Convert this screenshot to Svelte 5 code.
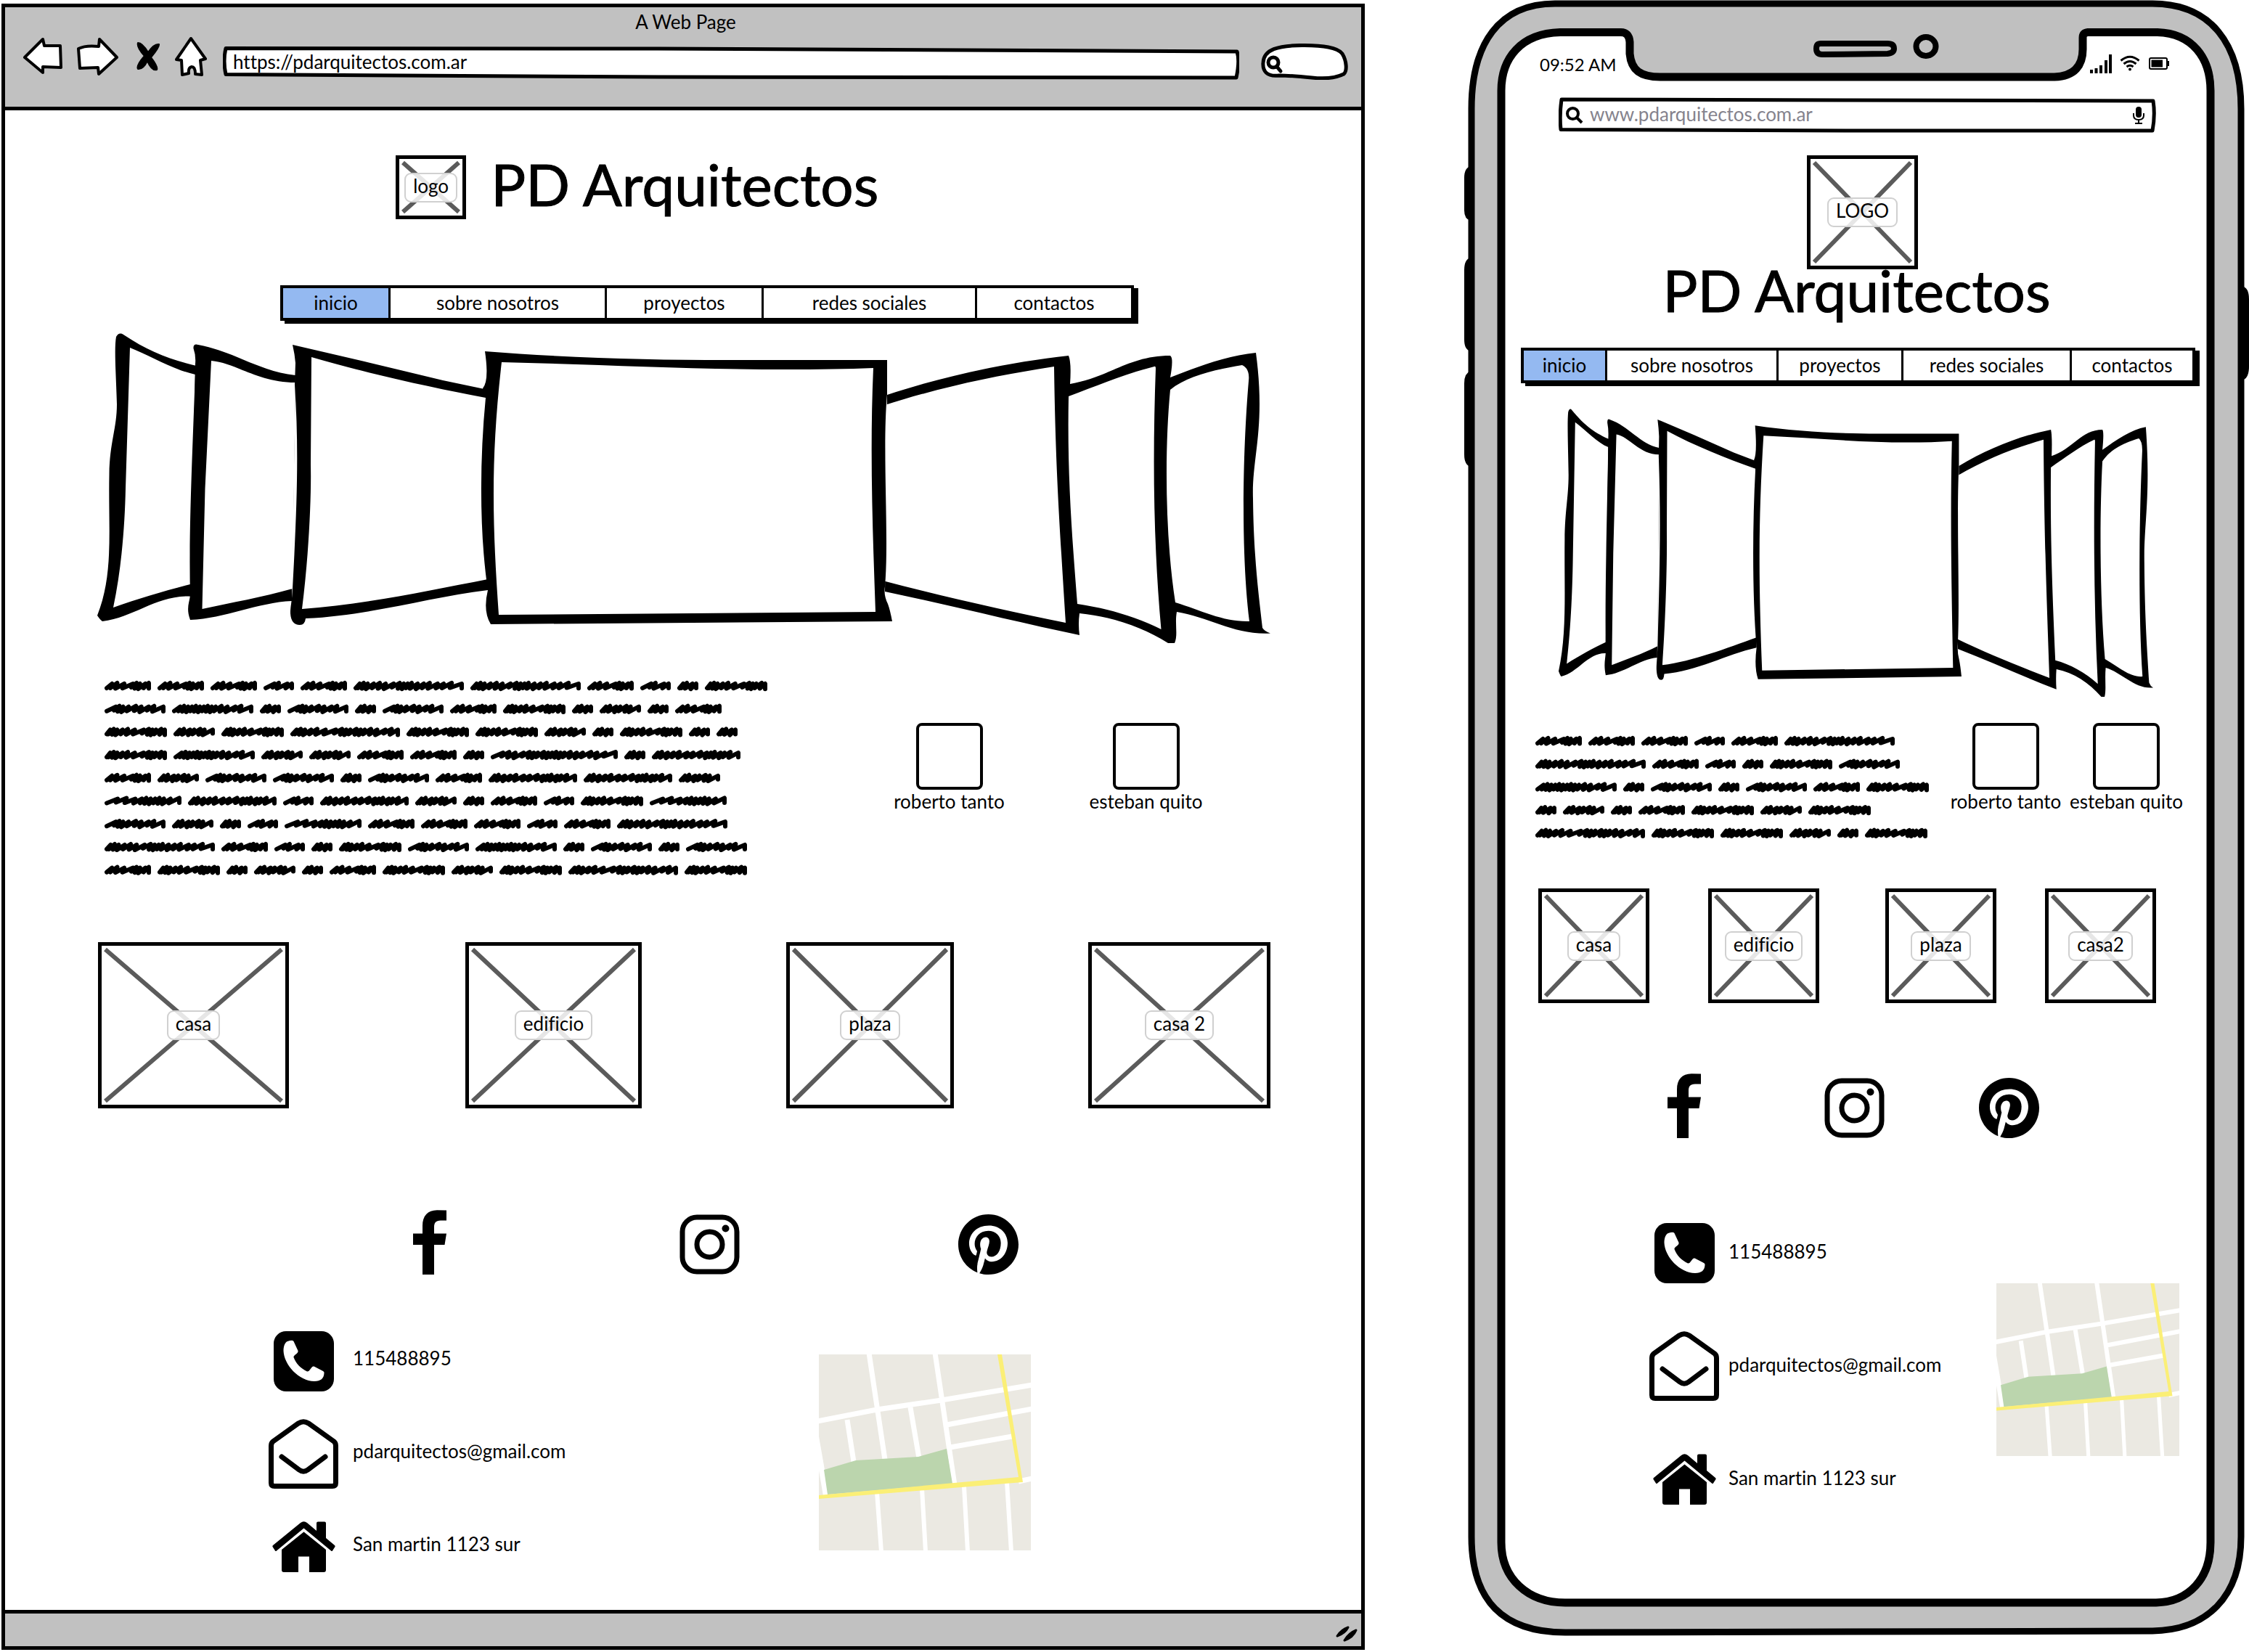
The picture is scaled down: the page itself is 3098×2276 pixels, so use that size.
<script>
  const menu = ['inicio', 'sobre nosotros', 'proyectos', 'redes sociales', 'contactos'];
  const team = ['roberto tanto', 'esteban quito'];
  const contacts = [
    { icon: 'phone', text: '115488895' },
    { icon: 'mail', text: 'pdarquitectos@gmail.com' },
    { icon: 'home', text: 'San martin 1123 sur' }
  ];
  const networks = ['facebook', 'instagram', 'pinterest'];
  const projects = ['casa', 'edificio', 'plaza', 'casa 2'];
  const mobileProjects = ['casa', 'edificio', 'plaza', 'casa2'];

  // Scribbled words: total width and the rhythm of their strokes (bigger digit = wider stroke).
  const words = {
    w: [29, '2232'],
    s: [42, '4242'],
    p: [57, '2232324'],
    m: [64, '33452232'],
    t: [84, '522343435'],
    M: [86, '222334532232'],
    q: [106, '54432222234'],
    u: [112, '322222222233435'],
    x: [122, '223334343223234'],
    k: [151, '222334532232233433'],
    L: [152, '222333432223334345'],
    z: [175, '53343223222223334345']
  };

  const longText = ['mmmsmLLmswM', 'tuwtwtmMwpwm', 'MpMkMMpwMww', 'MuppmmwzwX', 'mpttwtmxxp', 'qxsxpwmsMq', 'tpwsqmmmsmL', 'LmswMtuwtwt', 'mMwpwmMpMkM'].map((l) => l.replace('X', 'x'));
  const shortText = ['mmmsmL', 'LmswMt', 'uwtwtmM', 'wpwmMpM', 'kMMpwM'];

  function scribble(lines) {
    let d = '';
    lines.forEach((line, row) => {
      let left = 0;
      const y = row * 31.7;
      for (const key of line) {
        const [width, steps] = words[key];
        const nums = [...steps].map(Number);
        const unit = (width - 6) / nums.reduce((a, b) => a + b, 0);
        let x = left + 3;
        d += `M${x.toFixed(1)} ${(y + 14).toFixed(1)}`;
        nums.forEach((n, i) => {
          x += n * unit;
          const up = y + 7.5 + (i % 3 === 1 ? -0.5 : 0.5);
          const down = y + 14 + (i % 3) * 0.6 - (n > 3 ? 1 : 0);
          d += `L${x.toFixed(1)} ${up.toFixed(1)}`;
          d += `L${(x - (i === nums.length - 1 ? 0 : 2.5)).toFixed(1)} ${down.toFixed(1)}`;
        });
        left += width + 9;
      }
    });
    return d;
  }
</script>

{#snippet placeholder(label)}
  <figure class="placeholder">
    <svg class="cross" viewBox="0 0 100 100" preserveAspectRatio="none" aria-hidden="true">
      <path d="M0 0L100 100M100 0L0 100" />
    </svg>
    <figcaption>{label}</figcaption>
  </figure>
{/snippet}

{#snippet siteMenu()}
  <nav class="menu" aria-label="Principal">
    {#each menu as item, i}
      <a href="#{item.replace(' ', '-')}" class:active={i === 0}>{item}</a>
    {/each}
  </nav>
{/snippet}

{#snippet carousel()}
  <svg class="carousel" viewBox="134 460 1616 426" preserveAspectRatio="none" role="img" aria-label="Carrusel">
    <path d="M160 464Q164 457 170 461C206 485 236 496 275 505L270 822C218 817 188 850 141 856Q138 854 134 848C157 790 149 730 150.500 653C151 610 161 590 161 557C160 520 157 480 160 464Z" />
    <path class="face" d="M179 479C207 490 240 510 269 516L262 805C230 813 190 825 156 837C168 780 172 720 173 673Z" />
    <path d="M266.500 480Q266 473 273 475C325 485 355 511 407 517L402 828C355 830 310 852 262 854C256 838 261 830 262 820C260 740 264 650 268 540L269 501Q270 490 266.500 480Z" />
    <path class="face" d="M291 497C325 500 355 527 407 527L403 811C360 823 320 830 278.500 839L282.500 673Z" />
    <path d="M403 475L502 498L610 524L672 537V813C590 823 510 848 421 852Q420 861 413 861Q401 861 400 845C400 835 402 830 403 811C409 700 412 620 406 530L407 500Q406 488 403 475Z" />
    <path class="face" d="M429 492C500 513 590 533 669 548L672 798C590 814 500 833 416 839C426 760 429 680 428 640Z" />
    <path d="M1222 544C1300 518 1390 499 1472 490Q1476 500 1474 529C1530 519 1555 490 1612 490Q1617 493 1612 520C1650 505 1690 490 1730 486C1744 590 1724 630 1726 687C1727 770 1734 820 1739 865Q1742 870 1750 872.500C1700 875 1665 850 1621 843C1618 860 1623 875 1618 886H1609C1575 865 1535 850 1487 845Q1485 860 1487 875C1400 857 1310 834 1219 815Z" />
    <path class="face" d="M1216 559C1300 532 1375 517 1452 505C1454 650 1460 730 1468 858C1390 842 1300 822 1216 800Z" />
    <path class="face" d="M1472 546C1510 532 1550 515 1590 505Q1592 504 1592 508C1588 620 1588 740 1599.500 867C1565 850 1525 838 1484 832C1476 730 1470 650 1472 546Z" />
    <path class="face" d="M1612 537C1635 518 1675 509 1711 503Q1722 508 1720 525C1712 620 1709 760 1721 856C1685 857 1655 841 1619 830C1605 740 1604 620 1612 537Z" />
    <path d="M668 484C780 493 900 496 1000 496H1222V543C1215 620 1225 740 1219 808Q1217 820 1223 832Q1226 840 1229 856L676 860Q665 842 672 813C661 740 660 640 669 548L665 535Q674 525 668 484Z" />
    <path class="face" d="M691 499C817 502 950 509 1083 509Q1150 509 1203 507C1198 620 1202 730 1206 843L687 847C678 720 676 630 691 499Z" />
  </svg>
{/snippet}

{#snippet paragraph(lines, width)}
  <svg class="scribble" {width} height={lines.length * 32 - 12} role="img" aria-label="Texto">
    <path d={scribble(lines)} />
  </svg>
{/snippet}

{#snippet member(name)}
  <figure class="member">
    <div class="avatar"></div>
    <figcaption>{name}</figcaption>
  </figure>
{/snippet}

{#snippet network(name)}
  <a class="network" href="#{name}" aria-label={name}>
    {#if name === 'facebook'}
      <svg width="46" height="89" viewBox="0 0 46 89"><path d="M46 .5V14.600H38C31 14.600 29 18 29 24V32.500H46L43.500 48H29V89H13V48H0V32.500H13V22C13 8 20 .5 33 .2Z" /></svg>
    {:else if name === 'instagram'}
      <svg width="83" height="83" viewBox="0 0 83 83">
        <rect class="line" x="4" y="4" width="75" height="75" rx="20" />
        <circle class="line" cx="41.500" cy="41.500" r="17.500" />
        <circle cx="63.500" cy="19.500" r="5" />
      </svg>
    {:else}
      <svg width="83" height="83" viewBox="0 8 496 496"><path d="M496 256c0 137-111 248-248 248-25.600 0-50.200-3.900-73.400-11.100 10.100-16.500 25.200-43.500 30.800-65 3-11.600 15.400-59 15.400-59 8.100 15.400 31.700 28.500 56.800 28.500 74.800 0 128.700-68.800 128.700-154.300 0-81.900-66.900-143.200-152.900-143.200-107 0-163.900 71.800-163.900 150.100 0 36.400 19.400 81.700 50.300 96.100 4.700 2.200 7.200 1.200 8.300-3.300.8-3.400 5-20.300 6.900-28.100.6-2.500.3-4.700-1.700-7.100-10.100-12.500-18.300-35.300-18.300-56.600 0-54.700 41.400-107.600 112-107.600 60.900 0 103.600 41.500 103.600 100.900 0 67.100-33.900 113.600-78 113.600-24.300 0-42.600-20.100-36.700-44.800 7-29.500 20.500-61.300 20.500-82.600 0-19-10.200-34.900-31.400-34.900-24.900 0-44.900 25.700-44.900 60.200 0 22 7.400 36.800 7.400 36.800s-24.500 103.800-29 123.200c-5 21.400-3 51.600-.9 71.200C65.400 450.900 0 361.100 0 256 0 119 111 8 248 8s248 111 248 248z" /></svg>
    {/if}
  </a>
{/snippet}

{#snippet contactList()}
  <ul class="contacts">
    {#each contacts as { icon, text }}
      <li>
        <span class="contact-icon">
          {#if icon === 'phone'}
            <svg width="83" height="83" viewBox="0 0 83 83" aria-hidden="true">
              <rect width="83" height="83" rx="17" />
              <path class="white" d="M13.500 27C13.500 20 16 15 19 14Q26 11.500 27.500 14L33.500 27Q34 29 31 31.500Q27 34 27.500 36C31 45 37 51 46 55.500Q48 56 50 53C53 48.500 54 48 56 48.700L68 55Q70 56 69.500 58C69 65 65 69 56 69C35 69 14 46 13.500 27Z" />
            </svg>
          {:else if icon === 'mail'}
            <svg width="96" height="96" viewBox="0 0 96 96" aria-hidden="true">
              <path class="line" d="M3.500 37Q3.500 33 6 31L41 6Q48 1.500 55 6L90 31Q92.500 33 92.500 37V88Q92.500 92.500 88 92.500H8Q3.500 92.500 3.500 88Z" />
              <path class="line" d="M18 52L42 70Q48 74.500 54 70L78 52" stroke-linecap="round" />
            </svg>
          {:else}
            <svg width="87" height="70" viewBox="0 0 87 70" aria-hidden="true">
              <path d="M.5 35Q0 34 1 33L39 2Q43.500-1.500 48 2L61 13V2.500Q61 .5 63 .5H72Q74 .5 74 2.500V23L86 33Q87 34 86.500 35L83 40.500Q82 41.500 81 40.500L43.500 9.500L6 40.500Q5 41.500 4 40.500Z" />
              <path d="M13 39L43.500 14.500L74 39V67Q74 70 71 70H51V48.500H36V70H16Q13 70 13 67Z" />
            </svg>
          {/if}
        </span>
        <span class="contact-text">{text}</span>
      </li>
    {/each}
  </ul>
{/snippet}

{#snippet map()}
  <svg class="map" viewBox="0 0 292 270" preserveAspectRatio="none" role="img" aria-label="Mapa">
    <rect width="292" height="270" fill="#ebe9e2" />
    <g fill="none" stroke="#fff" stroke-width="7">
      <path d="M69 -2L91 145M160 -2L187 180M-2 92L80 76L169 63L294 42M39 90L48 148M126 73L138 143M176 97L294 75M181 128L266 113M275 175L294 171" />
      <path stroke-width="6" d="M80 190L86 272M142 185L147 272M200 182L205 272M259 176L265 272" />
    </g>
    <path fill="#fff" d="M0 113L8 159L13 195H6L0 160Z" />
    <path fill="#bbd5ad" d="M7 159L51 146L137 141L176 130L184 178L12 193Z" />
    <path fill="#fbef76" d="M246 0H252L281 176L0 199V194L275 169Z" />
  </svg>
{/snippet}

<div class="page">
  <article class="browser">
    <header class="toolbar">
      <p class="window-title">A Web Page</p>
      <div class="tools">
        <div class="buttons">
          <button type="button" aria-label="Atrás"><svg width="54" height="54" viewBox="0 0 54 54"><path d="M2 28L27 3L29 12H51L52 42L27 41V49Z" /></svg></button>
          <button type="button" aria-label="Adelante"><svg width="57" height="54" viewBox="0 0 57 54"><path d="M2 16Q12 11 30 13L31 3L55 28L30 51L29 42L4 43Q3 30 2 16Z" /></svg></button>
          <button type="button" aria-label="Detener"><svg width="38" height="42" viewBox="-4 0 38 42"><path class="solid" d="M3 2Q9 2 17 15Q25 3 32 4Q33 8 21 22Q31 35 29 39Q22 41 16 27Q10 39 3 38Q0 34 12 20Q1 8 3 2Z" /></svg></button>
          <button type="button" aria-label="Inicio"><svg width="44" height="56" viewBox="0 0 44 56"><path d="M22 3L42 31L35 33L37 53L28 52Q28 42 23 42Q18 43 19 51L10 53L9 33L2 32Z" /></svg></button>
        </div>
        <div class="sketch address">
          <svg viewBox="0 0 1400 46" preserveAspectRatio="none" aria-hidden="true"><path d="M4 2.500L600 3L1397 7Q1401 20 1396 43L600 42L4 38.500Q0 20 4 2.500Z" /></svg>
          <input type="text" aria-label="Dirección" value="https://pdarquitectos.com.ar" />
        </div>
        <label class="sketch quick">
          <svg viewBox="0 0 120 50" preserveAspectRatio="none" aria-hidden="true">
            <path d="M25 44C8 46 2 38 3 26C4 9 22 2 60 2.500C85 3 105 5 112 14C118 24 119 38 114 42C104 47 88 49 70 47C50 45 40 44 25 44Z" />
            <circle cx="17" cy="26" r="7" class="lens" /><path class="lens" d="M22 32L27 38" />
          </svg>
          <input type="search" aria-label="Buscar" />
        </label>
      </div>
    </header>

    <main>
      <div class="row brand">
        <div class="brand-group">
          {@render placeholder('logo')}
          <h1>PD Arquitectos</h1>
        </div>
      </div>
      <div class="row menu-row">{@render siteMenu()}</div>
      <div class="row carousel-row">{@render carousel()}</div>
      <section class="row about">
        {@render paragraph(longText, 920)}
        {#each team as name}{@render member(name)}{/each}
      </section>
      <section class="row gallery">
        {#each projects as name}{@render placeholder(name)}{/each}
      </section>
      <div class="row social">
        {#each networks as name}{@render network(name)}{/each}
      </div>
      <section class="row contact">
        {@render contactList()}
        {@render map()}
      </section>
    </main>

    <footer>
      <svg width="32" height="26" viewBox="0 0 32 26" aria-hidden="true"><path d="M4 17Q10 8 19 5Q15 13 4 17ZM14 23Q20 13 30 9Q26 19 14 23Z" /></svg>
    </footer>
  </article>

  <article class="phone">
    <svg class="shell" viewBox="2017 0 1081 2254" preserveAspectRatio="none" aria-hidden="true">
      <path d="M2026 229Q2017 231 2017 245V290Q2017 302 2026 304ZM2026 355Q2017 357 2017 372V468Q2017 482 2026 484ZM2026 511Q2017 514 2017 528V626Q2017 641 2026 643ZM3088 394Q3098 396 3098 412V505Q3098 522 3088 524Z" />
      <path class="body" d="M2142 5H2965C3045 5 3087 60 3087 150V2117C3087 2200 3040 2246 2965 2247L2156 2249C2070 2249 2027 2205 2027 2117V150C2027 60 2065 5 2142 5Z" />
      <path class="screen" d="M2149 44.500H2232Q2244 44 2245 58V74C2247 97 2260 106 2287 106H2830C2858 105 2869 90 2869 68V52Q2869 45 2876 44.500H2972C3020 46 3045 80 3045 125V2125C3045 2175 3015 2207 2970 2208H2156C2105 2208 2068 2175 2068 2125V125C2068 80 2095 46 2149 44.500Z" />
      <path class="detail" d="M2508 60H2600Q2609 60 2609 67Q2609 73 2600 74L2510 75Q2502 75 2502 67Q2502 60 2508 60Z" />
      <ellipse class="detail" cx="2653" cy="64" rx="13.500" ry="13" />
    </svg>

    <div class="display">
      <div class="status">
        <time>09:52 AM</time>
        <svg width="110" height="28" viewBox="0 0 110 28" role="img" aria-label="Señal, wifi y batería">
          <path d="M0 22H4V27H0ZM6.500 20H10.500V27H6.500ZM13 16H17V27H13ZM20 9H24V27H20ZM26 1H30V27H26Z" />
          <path class="wave" d="M42.500 9.500Q55 -1 67.500 9.500M46.500 14Q55 7 63.500 14M50.500 18Q55 14.500 59.500 18" />
          <circle cx="55" cy="21.500" r="2" />
          <rect class="case" x="82" y="6" width="24" height="15" rx="2" />
          <path d="M84.500 8.500H100V18.500H84.500ZM107 10H109V17H107Z" />
        </svg>
      </div>

      <div class="row search-row">
        <label class="sketch search">
          <svg viewBox="0 0 823 49" preserveAspectRatio="none" aria-hidden="true"><path d="M4 3L400 4L819 5Q822 25 818 46L400 46L3 44.500Q1 25 4 3Z" /></svg>
          <svg class="glass" width="24" height="24" viewBox="0 0 24 24" aria-hidden="true"><circle cx="9.500" cy="9.500" r="7.500" /><path d="M15 15L22 22" /></svg>
          <input type="search" aria-label="Buscar" placeholder="www.pdarquitectos.com.ar" />
          <svg class="mic" width="16" height="24" viewBox="0 0 16 24" aria-hidden="true"><rect x="4" width="8" height="15" rx="4" /><path d="M1 9V12Q1 18 8 18Q15 18 15 12V9M8 18V22M3 23H13" /></svg>
        </label>
      </div>
      <div class="row logo-row">{@render placeholder('LOGO')}</div>
      <h1>PD Arquitectos</h1>
      <div class="row menu-row">{@render siteMenu()}</div>
      <div class="row carousel-row">{@render carousel()}</div>
      <section class="row about">
        {@render paragraph(shortText, 545)}
        {#each team as name}{@render member(name)}{/each}
      </section>
      <section class="row gallery">
        {#each mobileProjects as name}{@render placeholder(name)}{/each}
      </section>
      <div class="row social">
        {#each networks as name}{@render network(name)}{/each}
      </div>
      <section class="row contact">
        {@render contactList()}
        {@render map()}
      </section>
    </div>
  </article>
</div>

<style>
  :global(body) {
    margin: 0;
    background: #fff;
  }

  .page {
    display: grid;
    grid-template-columns: 1878fr 1081fr;
    gap: 137px;
    align-items: start;
    padding-left: 2px;
    color: #000;
    font: 26px/32px Lato, 'Open Sans', sans-serif;
    font-variant-ligatures: none;
  }

  h1,
  p,
  figure,
  ul {
    margin: 0;
    padding: 0;
  }

  h1 {
    font-size: 80px;
    line-height: 56px;
    font-weight: 400;
    white-space: nowrap;
    -webkit-text-stroke: 1px #000;
  }

  a {
    color: inherit;
    text-decoration: none;
  }

  svg {
    display: block;
  }

  input {
    min-width: 0;
    border: 0;
    outline: 0;
    padding: 0;
    background: none;
    font: inherit;
    color: inherit;
  }

  .row {
    display: grid;
  }

  /* Browser window */
  .browser {
    margin-top: 5px;
    border: 5px solid #000;
  }

  .toolbar {
    padding: 4px 18px 37px 25px;
    border-bottom: 5px solid #000;
    background: #c1c1c1;
  }

  .window-title {
    text-align: center;
  }

  .tools {
    display: flex;
    align-items: flex-end;
    height: 64px;
  }

  .buttons {
    display: flex;
    align-items: center;
    gap: 20px;
    margin: 0 22px 4px 0;
  }

  button {
    padding: 0;
    border: 0;
    background: none;
  }

  .buttons path {
    fill: #fff;
    stroke: #000;
    stroke-width: 4;
    stroke-linejoin: round;
  }

  .buttons .solid {
    fill: #000;
    stroke-width: 2;
  }

  .sketch {
    display: grid;
    align-items: center;
  }

  .sketch > svg:first-child {
    grid-area: 1 / 1 / 2 / -1;
    width: 100%;
    height: 100%;
    fill: #fff;
    stroke: #000;
    stroke-width: 5;
    stroke-linejoin: round;
  }

  .address {
    flex: 1;
    height: 46px;
  }

  .address input {
    grid-area: 1 / 1;
    padding: 0 14px 4px;
  }

  .quick {
    width: 120px;
    height: 50px;
    margin-left: 30px;
  }

  .quick input {
    grid-area: 1 / 1;
    width: 68px;
    margin-left: 36px;
  }

  .quick .lens {
    fill: none;
    stroke-width: 5;
    stroke-linecap: round;
  }

  footer {
    display: flex;
    justify-content: flex-end;
    align-items: center;
    height: 45px;
    padding: 8px 5px 0 0;
    box-sizing: border-box;
    border-top: 5px solid #000;
    background: #c1c1c1;
  }

  footer {
    height: 50px;
  }

  footer path {
    stroke: #000;
    stroke-width: 3;
    stroke-linejoin: round;
  }

  main {
    padding: 62px 0 23px;
  }

  .row > :global(:first-child) {
    grid-column-start: 2;
  }

  .brand {
    grid-template-columns: 536fr auto 662fr;
  }

  .brand-group {
    display: flex;
    align-items: center;
    gap: 34px;
  }

  .brand-group h1 {
    padding-bottom: 10px;
  }

  .brand-group .placeholder {
    width: 97px;
    height: 88px;
  }

  .menu-row {
    margin-top: 91px;
    grid-template-columns: 379fr 1176fr 313fr;
  }

  .menu {
    display: grid;
    grid-template-columns: 145fr 298fr 216fr 294fr 215fr;
    border: 4px solid #000;
    box-shadow: 6px 4px 0 #000;
  }

  .menu a {
    padding: 4px 0 5px;
    text-align: center;
    white-space: nowrap;
  }

  .menu a + a {
    border-left: 3px solid #000;
  }

  .menu .active {
    background: #94b9f1;
  }

  .carousel-row {
    margin-top: 18px;
    grid-template-columns: 127fr 1616fr 125fr;
  }

  .carousel {
    width: 100%;
    height: 426px;
    overflow: visible;
  }

  .face {
    fill: #fff;
  }

  .about {
    margin-top: 48px;
    grid-template-columns: 137fr 1028fr 271fr 271fr 161fr;
  }

  .scribble {
    max-width: 100%;
  }

  .scribble path {
    fill: none;
    stroke: #000;
    stroke-width: 6;
    stroke-linecap: round;
    stroke-linejoin: round;
  }

  .member {
    padding-top: 62px;
    text-align: center;
    white-space: nowrap;
  }

  .avatar {
    width: 84px;
    height: 84px;
    margin: 0 auto;
    border: 4px solid #000;
    border-radius: 8px;
  }

  .placeholder {
    display: grid;
    grid-template: minmax(0, 1fr) / minmax(0, 1fr);
    place-items: center;
    box-sizing: border-box;
    border: 5px solid #000;
  }

  .cross {
    grid-area: 1 / 1;
    box-sizing: border-box;
    width: 100%;
    height: 100%;
    min-height: 0;
    padding: 5px;
    overflow: visible;
    stroke: #5b5b5b;
    stroke-width: 6;
  }

  .cross path {
    vector-effect: non-scaling-stroke;
  }

  .placeholder figcaption {
    grid-area: 1 / 1;
    padding: 0 10px 5px;
    border: 2px solid #d0d0d0;
    border-radius: 9px;
    background: rgb(255 255 255 / 85%);
    white-space: nowrap;
  }

  .gallery {
    margin-top: 88px;
    grid-template-columns: 128fr 263fr 243fr 243fr 199fr 231fr 185fr 251fr 125fr;
  }

  .gallery .placeholder {
    height: 229px;
  }

  .gallery .placeholder:nth-child(2),
  .social .network:nth-child(2) {
    grid-column: 4;
  }

  .gallery .placeholder:nth-child(3),
  .social .network:nth-child(3) {
    grid-column: 6;
  }

  .gallery .placeholder:nth-child(4) {
    grid-column: 8;
  }

  .social {
    margin-top: 140px;
    align-items: end;
    grid-template-columns: 562fr 46fr 321fr 83fr 301fr 83fr 472fr;
  }

  .line {
    fill: none;
    stroke: #000;
    stroke-width: 7;
  }

  .white {
    fill: #fff;
  }

  .contact {
    margin-top: 55px;
    align-items: start;
    grid-template-columns: 363fr 758fr 292fr 455fr;
  }

  .contacts {
    list-style: none;
  }

  .contacts li {
    display: flex;
    align-items: center;
    gap: 20px;
    height: 128px;
  }

  .contact-icon {
    display: flex;
    justify-content: center;
    width: 96px;
  }

  .contact-text {
    padding-bottom: 9px;
  }

  .map {
    width: 100%;
    height: 270px;
    margin-top: 55px;
  }

  /* Phone */
  .phone {
    display: grid;
  }

  .shell {
    grid-area: 1 / 1;
    width: 100%;
    height: 100%;
  }

  .body {
    fill: #c0c0c0;
    stroke: #000;
    stroke-width: 9;
  }

  .screen {
    fill: #fff;
    stroke: #000;
    stroke-width: 11;
  }

  .detail {
    fill: #c0c0c0;
    stroke: #000;
    stroke-width: 8;
  }

  .display {
    grid-area: 1 / 1;
    position: relative;
    padding: 74px 58px 137px;
  }

  .status {
    display: flex;
    justify-content: space-between;
    height: 30px;
    padding: 0 51px 0 46px;
    font-size: 24px;
    line-height: 30px;
  }

  .wave {
    fill: none;
    stroke: #000;
    stroke-width: 3;
  }

  .case {
    fill: none;
    stroke: #000;
    stroke-width: 2;
  }

  .search-row {
    margin-top: 30px;
    grid-template-columns: 72fr 823fr 70fr;
  }

  .search {
    grid-template-columns: 43px 1fr 32px;
    height: 49px;
  }

  .search .glass,
  .search .mic {
    grid-row: 1;
    fill: none;
    stroke: #000;
    stroke-width: 4;
  }

  .search .glass {
    grid-column: 1;
    margin-left: 10px;
  }

  .search .mic {
    grid-column: 3;
    stroke-width: 2;
  }

  .mic rect {
    fill: #000;
    stroke: none;
  }

  .search input {
    grid-area: 1 / 2;
    padding-bottom: 4px;
  }

  .search input::placeholder {
    color: #85838d;
    opacity: 1;
  }

  .logo-row {
    margin-top: 31px;
    grid-template-columns: 414fr 153fr 398fr;
  }

  .logo-row .placeholder {
    height: 157px;
  }

  .phone h1 {
    text-align: center;
  }

  .phone .menu-row {
    margin-top: 52px;
    grid-template-columns: 20fr 929fr 16fr;
  }

  .phone .menu {
    grid-template-columns: 112fr 236fr 172fr 232fr 169fr;
  }

  .phone .carousel-row {
    margin-top: 36px;
    grid-template-columns: 72fr 819fr 74fr;
  }

  .phone .carousel {
    height: 396px;
  }

  .phone .about {
    margin-top: 36px;
    grid-template-columns: 40fr 565fr 166fr 166fr 28fr;
  }

  .phone .scribble {
    margin-top: 14px;
  }

  .phone .member {
    padding-top: 0;
  }

  .phone .gallery {
    margin-top: 66px;
    grid-template-columns: 44fr 153fr 81fr 153fr 91fr 153fr 67fr 153fr 70fr;
  }

  .phone .gallery .placeholder {
    height: 158px;
  }

  .phone .social {
    margin-top: 97px;
    grid-template-columns: 222fr 47fr 170fr 82fr 130fr 83fr 231fr;
  }

  .phone .contact {
    margin-top: 80px;
    grid-template-columns: 197fr 478fr 252fr 38fr;
  }

  .phone .contacts li {
    gap: 13px;
    height: 156px;
  }

  .phone .contact-text {
    padding-bottom: 5px;
  }

  .phone .map {
    height: 238px;
    margin-top: 120px;
  }
</style>
